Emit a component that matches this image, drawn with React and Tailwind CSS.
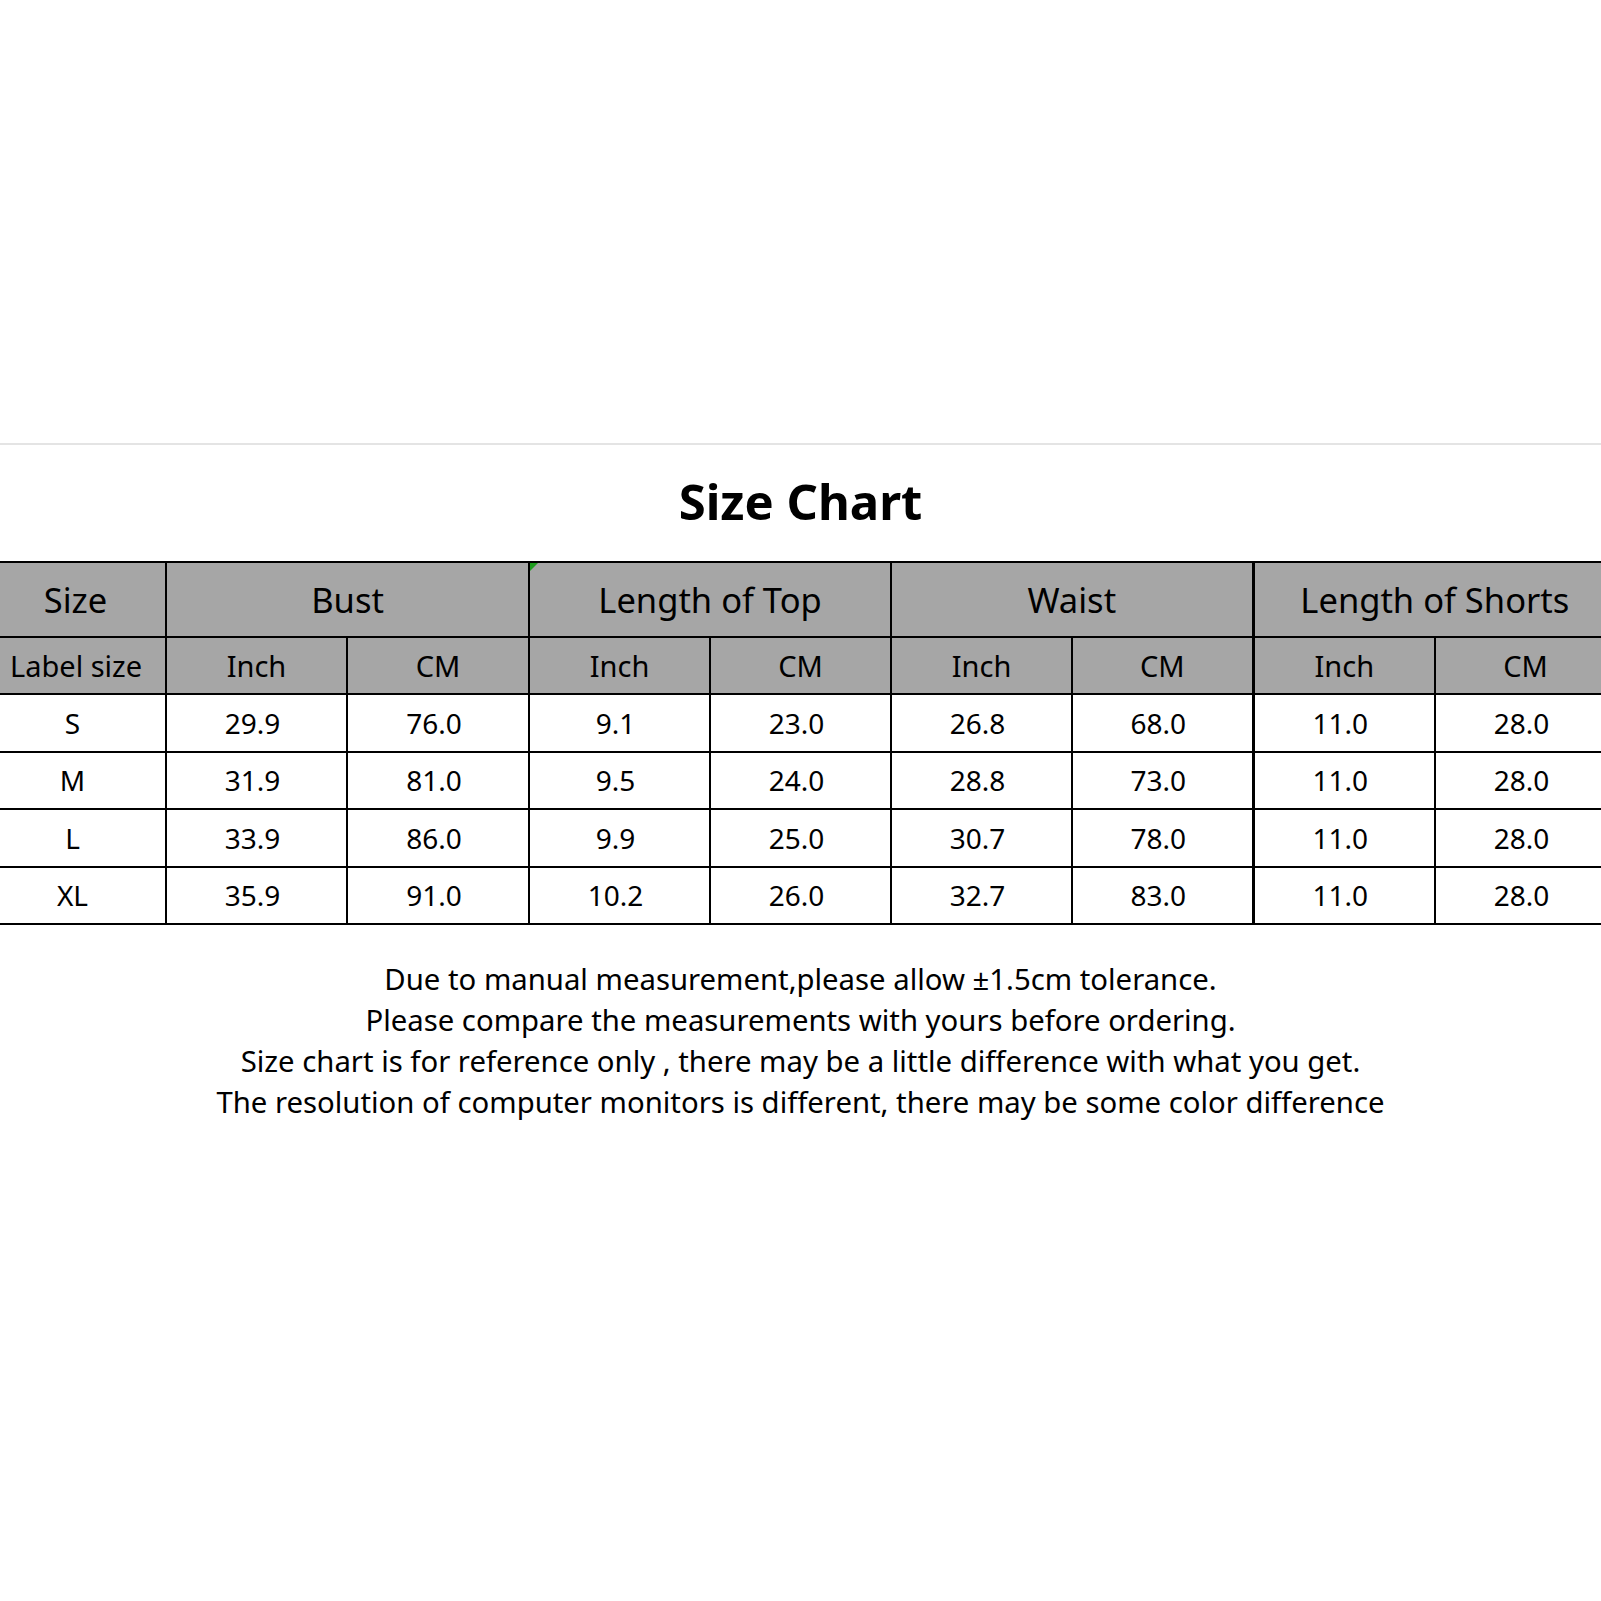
import React from "react";

const rows = [
  ["S", "29.9", "76.0", "9.1", "23.0", "26.8", "68.0", "11.0", "28.0"],
  ["M", "31.9", "81.0", "9.5", "24.0", "28.8", "73.0", "11.0", "28.0"],
  ["L", "33.9", "86.0", "9.9", "25.0", "30.7", "78.0", "11.0", "28.0"],
  ["XL", "35.9", "91.0", "10.2", "26.0", "32.7", "83.0", "11.0", "28.0"],
];

const widths = [181, 181, 182, 181, 181, 181, 181, 182, 181];

export default function App() {
  return (
    <div
      className="w-[1601px] h-[1601px] bg-white overflow-hidden text-black"
      style={{ fontFamily: '"Noto Sans", "Open Sans", sans-serif' }}
    >
      <div className="h-[443px]" />
      <div className="h-[2px] bg-[#e4e4e4]" />
      <div className="pt-[26px] h-[116px]">
        <h1 className="text-center text-[49px] leading-[60px] font-bold">Size Chart</h1>
      </div>
      <div className="relative -ml-[16px] w-[1632px]">
        <table className="table-fixed border-collapse w-[1631px]">
          <colgroup>
            {widths.map((w, i) => (
              <col key={i} style={{ width: w }} />
            ))}
          </colgroup>
          <thead>
            <tr className="h-[75px] bg-[#a6a6a6] text-[34.5px]">
              <th className="border-2 border-black font-normal">Size</th>
              <th colSpan={2} className="border-2 border-black font-normal">Bust</th>
              <th colSpan={2} className="relative border-2 border-black font-normal">
                Length of Top
                <span className="absolute left-0 top-0 w-0 h-0 border-t-[8px] border-t-[#1f9d1f] border-r-[8px] border-r-transparent" />
              </th>
              <th colSpan={2} className="border-2 border-black border-r-[3px] font-normal">Waist</th>
              <th colSpan={2} className="border-2 border-black border-l-[3px] font-normal">Length of Shorts</th>
            </tr>
            <tr className="h-[57px] bg-[#a6a6a6] text-[29px]">
              <th className="border-2 border-black font-normal pl-[24px] text-left">Label size</th>
              <th className="border-2 border-black font-normal">Inch</th>
              <th className="border-2 border-black font-normal">CM</th>
              <th className="border-2 border-black font-normal">Inch</th>
              <th className="border-2 border-black font-normal">CM</th>
              <th className="border-2 border-black font-normal">Inch</th>
              <th className="border-2 border-black border-r-[3px] font-normal">CM</th>
              <th className="border-2 border-black border-l-[3px] font-normal">Inch</th>
              <th className="border-2 border-black font-normal">CM</th>
            </tr>
          </thead>
          <tbody>
            {rows.map((r) => (
              <tr key={r[0]} className="h-[57.5px] text-[28px]">
                {r.map((c, i) => (
                  <td
                    key={i}
                    className={
                      "border-2 border-black text-center " +
                      (i === 0 ? "pr-[6px] " : "pr-[8px] ") +
                      (i === 6 ? "border-r-[3px] " : "") +
                      (i === 7 ? "border-l-[3px] " : "")
                    }
                  >
                    {c}
                  </td>
                ))}
              </tr>
            ))}
          </tbody>
        </table>
      </div>
      <div className="mt-[34px] text-center text-[29.3px] leading-[41px]">
        <p>Due to manual measurement,please allow ±1.5cm tolerance.</p>
        <p>Please compare the measurements with yours before ordering.</p>
        <p>Size chart is for reference only , there may be a little difference with what you get.</p>
        <p>The resolution of computer monitors is different, there may be some color difference</p>
      </div>
    </div>
  );
}
